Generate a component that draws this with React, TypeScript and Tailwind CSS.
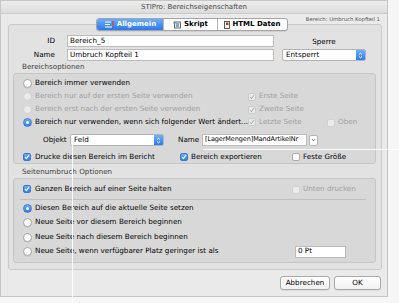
import React from "react";

function Radio({ on, disabled }: { on?: boolean; disabled?: boolean }) {
  if (on)
    return (
      <span className="w-[9px] h-[9px] shrink-0 rounded-full border border-[#3b7bd6] bg-linear-to-b from-[#6eb1fb] to-[#2d7cf0] flex items-center justify-center">
        <span className="w-[3px] h-[3px] rounded-full bg-white" />
      </span>
    );
  return (
    <span
      className={
        disabled
          ? "w-[9px] h-[9px] shrink-0 rounded-full border border-[#d0d0d0] bg-[#ebebeb]"
          : "w-[9px] h-[9px] shrink-0 rounded-full border border-[#a8a8a8] bg-white shadow-[0_0.5px_0.5px_rgba(0,0,0,0.12)]"
      }
    />
  );
}

function Check({ checked, disabled }: { checked?: boolean; disabled?: boolean }) {
  if (checked && !disabled)
    return (
      <span className="w-[8px] h-[8px] shrink-0 rounded-[2px] border border-[#3a78d2] bg-linear-to-b from-[#6aaefb] to-[#2f7ef0] flex items-center justify-center">
        <svg width="6" height="6" viewBox="0 0 6 6">
          <path d="M1 3.2 L2.4 4.6 L5 1.2" fill="none" stroke="#fff" strokeWidth="1.1" />
        </svg>
      </span>
    );
  if (checked)
    return (
      <span className="w-[8px] h-[8px] shrink-0 rounded-[2px] border border-[#cbcbcb] bg-[#e9e9e9] flex items-center justify-center">
        <svg width="6" height="6" viewBox="0 0 6 6">
          <path d="M1 3.2 L2.4 4.6 L5 1.2" fill="none" stroke="#a3a3a3" strokeWidth="1" />
        </svg>
      </span>
    );
  return (
    <span
      className={
        disabled
          ? "w-[8px] h-[8px] shrink-0 rounded-[2px] border border-[#d2d2d2] bg-[#ececec]"
          : "w-[8px] h-[8px] shrink-0 rounded-[2px] border border-[#acacac] bg-white"
      }
    />
  );
}

function Arrows() {
  return (
    <svg width="5" height="7" viewBox="0 0 5 7">
      <path d="M1 2.6 L2.5 1.2 L4 2.6 M1 4.4 L2.5 5.8 L4 4.4" fill="none" stroke="#fff" strokeWidth="0.9" />
    </svg>
  );
}

function Select({ value, w }: { value: string; w: string }) {
  return (
    <div className={`${w} h-[12px] flex bg-white border border-[#b3b3b3] rounded-[2px] overflow-hidden`}>
      <span className="flex-1 pl-[3px] flex items-center text-black">{value}</span>
      <span className="w-[9px] bg-linear-to-b from-[#6db0fb] to-[#2b7aee] flex items-center justify-center">
        <Arrows />
      </span>
    </div>
  );
}

function Field({ value, w, t = "" }: { value: string; w: string; t?: string }) {
  return (
    <div className={`${w} ${t} h-[12px] flex items-center bg-white border border-[#bcbcbc] pl-[2px] text-black whitespace-nowrap overflow-hidden`}>
      {value}
    </div>
  );
}

export default function App() {
  return (
    <div className="relative w-[399px] h-[303px] overflow-hidden bg-[#f6f6f6] font-['DejaVu_Sans',sans-serif] text-[7.2px] text-[#151515]">
      <div className="w-[388px] h-[297px] bg-[#eaeaea] border border-[#c6c6c6] flex flex-col">
        {/* title bar */}
        <div className="h-[13px] shrink-0 bg-linear-to-b from-[#ededed] to-[#dcdcdc] border-b border-[#cacaca] flex items-center justify-center text-[7px] text-[#4b4b4b]">
          STIPro: Bereichseigenschaften
        </div>

        {/* tabs */}
        <div className="mt-[4px] h-[13px] grid grid-cols-[1fr_auto_1fr] items-center pl-[3px] pr-[7px] relative z-10">
          <div />
          <div className="flex h-[13px] rounded-[3px] border border-[#a4a4a4] bg-white overflow-hidden font-bold text-[7px] shadow-[0_0.5px_0.5px_rgba(0,0,0,0.15)]">
            <div className="w-[66px] flex items-center justify-center gap-[2px] bg-linear-to-b from-[#6aaefb] to-[#2a77ed] text-white">
              <svg width="11" height="9" viewBox="0 0 11 9">
                <path d="M1 2 H7 M1 4.5 H6 M1 7 H8" stroke="#fff" strokeWidth="1" />
                <path d="M9 1 V5" stroke="#e0382b" strokeWidth="1.4" />
                <rect x="8.3" y="6.3" width="1.4" height="1.4" fill="#e0382b" />
              </svg>
              Allgemein
            </div>
            <div className="w-[54px] flex items-center justify-center gap-[2px] border-l border-[#b8b8b8] text-black">
              <svg width="9" height="8" viewBox="0 0 9 8">
                <rect x="1.5" y="1" width="6" height="6" fill="#e4e9ef" stroke="#40546c" strokeWidth="0.8" />
                <path d="M3 3 H6 M3 5 H6" stroke="#2a3b52" strokeWidth="0.8" />
                <rect x="0.5" y="0.5" width="2" height="2.5" fill="#6a8fbe" />
              </svg>
              Skript
            </div>
            <div className="w-[70px] flex items-center justify-center gap-[2px] border-l border-[#b8b8b8] text-black">
              <svg width="6" height="8" viewBox="0 0 6 8">
                <rect x="0.5" y="0.5" width="5" height="7" fill="#fff" stroke="#333" strokeWidth="0.8" />
                <rect x="2" y="1.5" width="2.5" height="2.5" fill="#d9261c" />
              </svg>
              HTML Daten
            </div>
          </div>
          <div className="self-start -mt-[2px] text-right leading-[7px] text-[5.3px] text-[#555]">Bereich: Umbruch Kopfteil 1</div>
        </div>

        {/* panel */}
        <div className="-mt-[7px] ml-[7px] w-[374px] bg-[#e2e2e2] border border-[#cacaca] rounded-[3px] pt-[10px] pb-[6px] flex flex-col">
          <div className="flex">
            <div className="flex flex-col gap-[2px]">
              <div className="flex items-center h-[12px]">
                <span className="w-[46px] text-right text-black">ID</span>
                <div className="ml-[12px]">
                  <Field value="Bereich_5" w="w-[207px]" />
                </div>
              </div>
              <div className="flex items-center h-[12px]">
                <span className="w-[46px] text-right text-black">Name</span>
                <div className="ml-[12px]">
                  <Field value="Umbruch Kopfteil 1" w="w-[207px]" />
                </div>
              </div>
            </div>
            <div className="ml-[8px] flex flex-col">
              <div className="h-[14px] flex items-center justify-center text-black">Sperre</div>
              <Select value="Entsperrt" w="w-[84px]" />
            </div>
          </div>

          <div className="mt-[1px] h-[11px] flex items-center pl-[13px] text-[#3d3d3d]">Bereichsoptionen</div>

          <div className="ml-[4px] w-[363px] bg-[#d8d8d8] border border-[#c6c6c6] rounded-[3px] pt-[3px] flex flex-col whitespace-nowrap">
            <div className="h-[13px] flex items-center pl-[9px] gap-[3px]">
              <Radio />
              <span className="text-black">Bereich immer verwenden</span>
            </div>
            <div className="h-[13px] flex items-center pl-[9px]">
              <div className="w-[225px] flex items-center gap-[3px] overflow-hidden">
                <Radio disabled />
                <span className="text-[#a0a0a0]">Bereich nur auf der ersten Seite verwenden</span>
              </div>
              <Check checked disabled />
              <span className="ml-[3px] text-[#a0a0a0]">Erste Seite</span>
            </div>
            <div className="h-[13px] flex items-center pl-[9px]">
              <div className="w-[225px] flex items-center gap-[3px] overflow-hidden">
                <Radio disabled />
                <span className="text-[#a0a0a0]">Bereich erst nach der ersten Seite verwenden</span>
              </div>
              <Check checked disabled />
              <span className="ml-[3px] text-[#a0a0a0]">Zweite Seite</span>
            </div>
            <div className="h-[13px] flex items-center pl-[9px]">
              <div className="w-[225px] flex items-center gap-[3px] overflow-hidden">
                <Radio on />
                <span className="text-black">Bereich nur verwenden, wenn sich folgender Wert ändert...</span>
              </div>
              <div className="w-[79px] flex items-center">
                <Check checked disabled />
                <span className="ml-[3px] text-[#a0a0a0]">Letzte Seite</span>
              </div>
              <Check disabled />
              <span className="ml-[3px] text-[#a0a0a0]">Oben</span>
            </div>

            <div className="mt-[5px] h-[12px] flex items-center pl-[29px]">
              <span className="w-[27px] text-black">Objekt</span>
              <Select value="Feld" w="w-[94px]" />
              <span className="ml-[14px] w-[24px] text-black">Name</span>
              <Field value="[LagerMengen]MandArtikelNr" w="w-[105px]" t="text-[6.5px] tracking-[-0.1px]" />
              <div className="ml-[2px] w-[9px] h-[11px] bg-white border border-[#b3b3b3] rounded-[2px] flex items-center justify-center">
                <svg width="5" height="4" viewBox="0 0 5 4">
                  <path d="M1 1.2 L2.5 2.7 L4 1.2" fill="none" stroke="#444" strokeWidth="0.8" />
                </svg>
              </div>
            </div>

            <div className="mt-[5px] h-[12px] flex items-center pl-[9px]">
              <div className="w-[157px] flex items-center gap-[4px]">
                <Check checked />
                <span className="text-black">Drucke diesen Bereich im Bericht</span>
              </div>
              <div className="w-[112px] flex items-center gap-[3px]">
                <Check checked />
                <span className="text-black">Bereich exportieren</span>
              </div>
              <Check />
              <span className="ml-[3px] text-black">Feste Größe</span>
            </div>
          </div>

          <div className="mt-[3px] h-[11px] flex items-center pl-[13px] text-[#3d3d3d]">Seitenumbruch Optionen</div>

          <div className="ml-[4px] w-[363px] bg-[#d8d8d8] border border-[#c6c6c6] rounded-[3px] pt-[4px] pb-[3px] flex flex-col whitespace-nowrap">
            <div className="h-[13px] flex items-center pl-[9px]">
              <div className="w-[269px] flex items-center gap-[4px]">
                <Check checked />
                <span className="text-black">Ganzen Bereich auf einer Seite halten</span>
              </div>
              <Check disabled />
              <span className="ml-[3px] text-[#a0a0a0]">Unten drucken</span>
            </div>
            <div className="mt-[3px] ml-[6px] w-[346px] h-px bg-[#bfbfbf]" />
            <div className="mt-[1px] h-[14.5px] flex items-center pl-[9px] gap-[3px]">
              <Radio on />
              <span className="text-black">Diesen Bereich auf die aktuelle Seite setzen</span>
            </div>
            <div className="h-[14.5px] flex items-center pl-[9px] gap-[3px]">
              <Radio />
              <span className="text-black">Neue Seite vor diesem Bereich beginnen</span>
            </div>
            <div className="h-[14.5px] flex items-center pl-[9px] gap-[3px]">
              <Radio />
              <span className="text-black">Neue Seite nach diesem Bereich beginnen</span>
            </div>
            <div className="h-[14.5px] flex items-center pl-[9px]">
              <div className="w-[272px] flex items-center gap-[3px]">
                <Radio />
                <span className="text-black">Neue Seite, wenn verfügbarer Platz geringer ist als</span>
              </div>
              <Field value="0 Pt" w="w-[51px]" />
            </div>
          </div>
        </div>

        {/* buttons */}
        <div className="mt-[6px] flex justify-end gap-[4px] pr-[6px]">
          <div className="w-[50px] h-[14px] flex items-center justify-center bg-linear-to-b from-white to-[#f1f1f1] border border-[#a9a9a9] rounded-[3px] text-black shadow-[0_0.5px_0.5px_rgba(0,0,0,0.12)]">
            Abbrechen
          </div>
          <div className="w-[47px] h-[14px] flex items-center justify-center bg-linear-to-b from-white to-[#f1f1f1] border border-[#a9a9a9] rounded-[3px] text-black shadow-[0_0.5px_0.5px_rgba(0,0,0,0.12)]">
            OK
          </div>
        </div>
      </div>

      {/* guide lines over the screenshot */}
      <div className="absolute left-[72px] top-[145px] w-px h-[158px] bg-white/90" />
      <div className="absolute left-[203px] top-[149px] w-[196px] h-px bg-white/90" />
    </div>
  );
}
